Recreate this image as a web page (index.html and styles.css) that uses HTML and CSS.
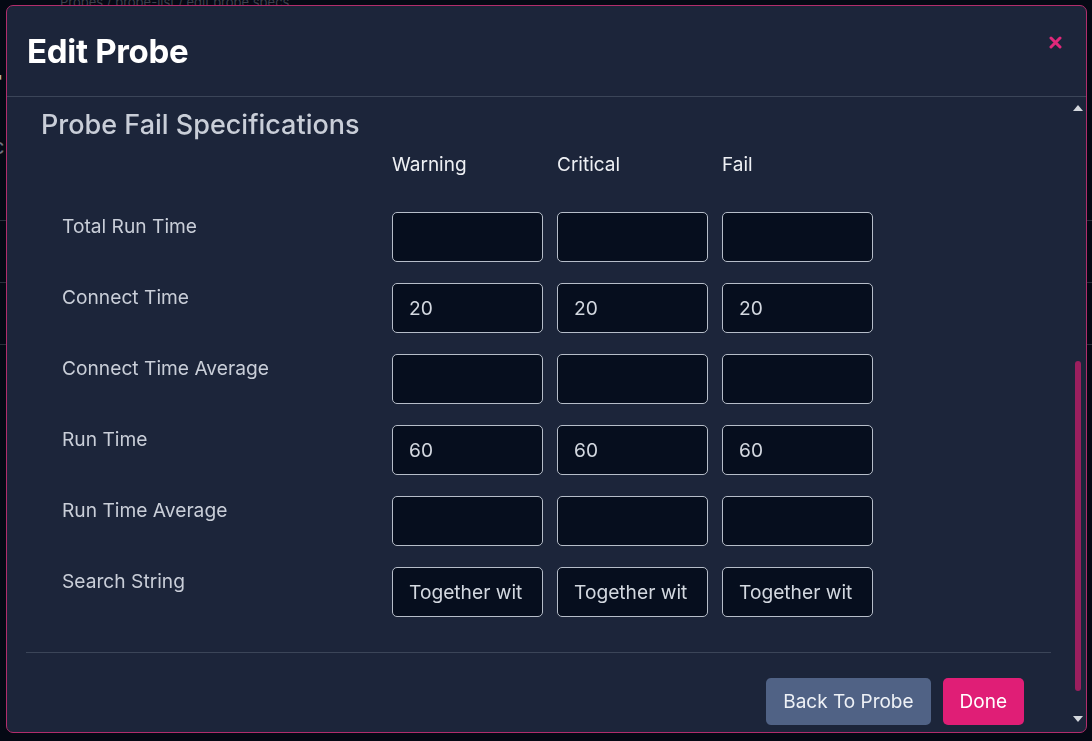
FILE: index.html
```html
<!DOCTYPE html>
<html lang="en">
<head>
    <meta charset="UTF-8">
    <meta name="viewport" content="width=device-width, initial-scale=1.0">
    <title>Edit Probe</title>
    <link rel="stylesheet" href="styles.css">
</head>
<body>
    <!-- Page behind the modal -->
    <div class="backdrop-page">
        <div class="crumbs">Probes / probe-list / edit probe specs</div>
        <h2 class="page-title">r</h2>
        <div class="page-sub">c</div>
        <div class="page-row"></div>
        <div class="page-row"></div>
        <div class="page-row"></div>
    </div>

    <div class="modal">
        <div class="modal-header">
            <h1>Edit Probe</h1>
            <button class="close-btn" aria-label="Close">
                <svg width="13" height="13" viewBox="0 0 13 13">
                    <path d="M2 2 L11 11 M11 2 L2 11" stroke="#e0287a" stroke-width="3" stroke-linecap="round"/>
                </svg>
            </button>
        </div>

        <div class="modal-body">
            <div class="modal-content">
                <h3 class="section-title">Probe Fail Specifications</h3>

                <div class="spec-grid">
                    <div></div>
                    <div class="col-head">Warning</div>
                    <div class="col-head">Critical</div>
                    <div class="col-head">Fail</div>

                    <div class="spec-label">Total Run Time</div>
                    <input class="spec-input" type="text" value="">
                    <input class="spec-input" type="text" value="">
                    <input class="spec-input" type="text" value="">

                    <div class="spec-label">Connect Time</div>
                    <input class="spec-input" type="text" value="20">
                    <input class="spec-input" type="text" value="20">
                    <input class="spec-input" type="text" value="20">

                    <div class="spec-label">Connect Time Average</div>
                    <input class="spec-input" type="text" value="">
                    <input class="spec-input" type="text" value="">
                    <input class="spec-input" type="text" value="">

                    <div class="spec-label">Run Time</div>
                    <input class="spec-input" type="text" value="60">
                    <input class="spec-input" type="text" value="60">
                    <input class="spec-input" type="text" value="60">

                    <div class="spec-label">Run Time Average</div>
                    <input class="spec-input" type="text" value="">
                    <input class="spec-input" type="text" value="">
                    <input class="spec-input" type="text" value="">

                    <div class="spec-label">Search String</div>
                    <input class="spec-input" type="text" value="Together wit">
                    <input class="spec-input" type="text" value="Together wit">
                    <input class="spec-input" type="text" value="Together wit">
                </div>

                <div class="modal-footer">
                    <button class="btn btn-secondary">Back To Probe</button>
                    <button class="btn btn-primary">Done</button>
                </div>
            </div>

            <!-- Scrollbar -->
            <div class="scrollbar">
                <span class="arrow arrow-up"></span>
                <div class="track">
                    <div class="thumb"></div>
                </div>
                <span class="arrow arrow-down"></span>
            </div>
        </div>
    </div>
</body>
</html>
```

FILE: styles.css
```css
:root {
    --page-bg: #050914;
    --modal-bg: #1c253a;
    --modal-border: #b22d6c;
    --divider: #3b4558;
    --input-bg: #060e1e;
    --input-border: #b6bdc9;
    --text-light: #eef0f4;
    --text-muted: #c9ced8;
    --pink: #e01e76;
    --slate: #506285;
}

* {
    box-sizing: border-box;
    margin: 0;
    padding: 0;
}

body {
    font-family: 'Inter', 'Noto Sans', sans-serif;
    background: var(--page-bg);
    color: var(--text-muted);
    height: 100vh;
    overflow: hidden;
}

/* Page behind the modal */
.backdrop-page {
    color: #9aa0aa;
}

.crumbs {
    font-size: 13px;
    line-height: 5px;
    height: 5px;
    overflow: hidden;
    padding-left: 60px;
    color: #3c424d;
}

.page-title {
    font-size: 40px;
    font-weight: 600;
    margin: 58px 0 0 -14px;
    line-height: 40px;
    color: #b8b3ad;
}

.page-sub {
    font-size: 22px;
    margin: 30px 0 0 -8px;
    color: #6c7280;
}

.page-row {
    height: 62px;
    border-bottom: 1px solid #2a2f3a;
}

/* Modal */
.modal {
    position: fixed;
    top: 5px;
    left: 6px;
    width: 1081px;
    height: 728px;
    background: var(--modal-bg);
    border: 1px solid var(--modal-border);
    border-radius: 7px;
    display: flex;
    flex-direction: column;
    overflow: hidden;
}

.modal-header {
    height: 91px;
    flex-shrink: 0;
    display: flex;
    align-items: center;
    justify-content: space-between;
    padding: 0 24px 0 20px;
    border-bottom: 1px solid var(--divider);
}

.modal-header h1 {
    font-size: 33px;
    font-weight: 700;
    color: #ffffff;
    letter-spacing: -0.3px;
}

.close-btn {
    background: none;
    border: none;
    display: flex;
    margin-top: -17px;
    cursor: pointer;
}

.modal-body {
    flex: 1;
    position: relative;
    overflow: hidden;
    padding-right: 16px;
}

.modal-content {
    padding: 0 19px;
}

.section-title {
    font-size: 27px;
    font-weight: 500;
    line-height: 32px;
    color: var(--text-muted);
    margin: 12px 0 10px 15px;
}

.spec-grid {
    display: grid;
    grid-template-columns: 316px repeat(3, 151px);
    column-gap: 14px;
    row-gap: 21px;
    padding-left: 36px;
    padding-bottom: 35px;
    border-bottom: 1px solid var(--divider);
}

.col-head {
    font-size: 19px;
    line-height: 27px;
    color: var(--text-light);
    margin-bottom: 13px;
}

.spec-label {
    font-size: 19.2px;
    line-height: 27px;
    padding-top: 1px;
    color: var(--text-muted);
}

.spec-input {
    width: 151px;
    height: 50px;
    background: var(--input-bg);
    border: 1px solid var(--input-border);
    border-radius: 5px;
    padding: 0 16px;
    font-family: inherit;
    font-size: 19.2px;
    color: #d3d8e0;
    outline: none;
}

.modal-footer {
    display: flex;
    justify-content: flex-end;
    gap: 12px;
    padding: 25px 27px 0 0;
}

.btn {
    height: 47px;
    padding: 0 17px;
    border: none;
    border-radius: 5px;
    font-family: inherit;
    font-size: 19px;
    color: #ffffff;
    cursor: pointer;
}

.btn-secondary {
    background: var(--slate);
    color: #eef1f6;
}

.btn-primary {
    background: var(--pink);
}

/* Scrollbar */
.scrollbar {
    position: absolute;
    top: 0;
    right: 0;
    bottom: 0;
    width: 16px;
    display: flex;
    flex-direction: column;
    align-items: center;
    padding: 8px 0 10px;
}

.arrow {
    width: 0;
    height: 0;
    border-left: 5px solid transparent;
    border-right: 5px solid transparent;
}

.arrow-up {
    border-bottom: 6px solid #d4d8de;
}

.arrow-down {
    border-top: 6px solid #d4d8de;
}

.track {
    flex: 1;
    width: 100%;
    display: flex;
    flex-direction: column;
    justify-content: flex-end;
    align-items: center;
    padding: 0 0 25px;
}

.thumb {
    width: 6px;
    height: 330px;
    border-radius: 3px;
    background: #9b1f5e;
    margin-left: 0;
}
```
